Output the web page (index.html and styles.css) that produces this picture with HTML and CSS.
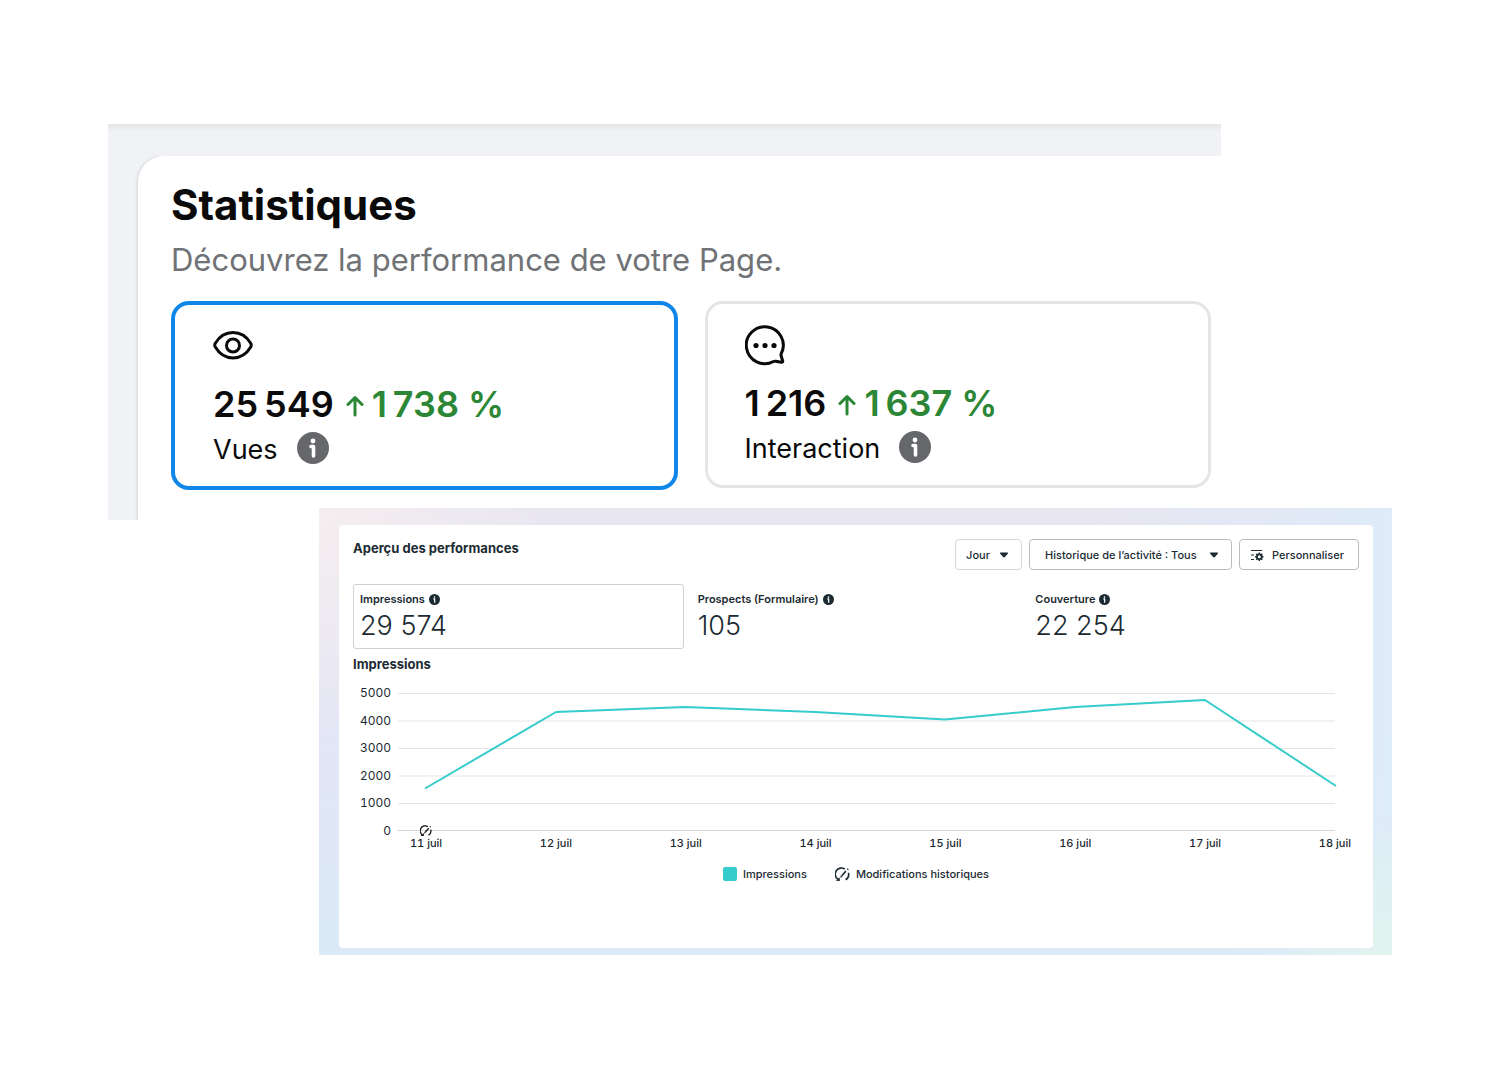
FILE: index.html
```html
<!DOCTYPE html>
<html lang="fr">
<head>
    <meta charset="UTF-8">
    <meta name="viewport" content="width=device-width, initial-scale=1.0">
    <title>Statistiques</title>
    <link rel="stylesheet" href="styles.css">
</head>
<body>
    <svg class="sprite" aria-hidden="true">
        <symbol id="info" viewBox="0 0 32 32">
            <circle cx="16" cy="16" r="16" fill="currentColor"/>
            <circle cx="16" cy="9" r="2.4" fill="#fff"/>
            <path d="M14 14.5h2.5V24" fill="none" stroke="#fff" stroke-width="3.6" stroke-linecap="round" stroke-linejoin="round"/>
        </symbol>
        <symbol id="arrow" viewBox="0 0 18 22">
            <path d="M9 20V3M2 9.500l7-7 7 7" fill="none" stroke="currentColor" stroke-width="3" stroke-linecap="round" stroke-linejoin="round"/>
        </symbol>
        <symbol id="caret" viewBox="0 0 10 6">
            <path d="M1.500.5h7q1 .3.300 1.200L5.900 5q-.9.800-1.800 0L1.200 1.700Q.5.800 1.500.5z" fill="currentColor"/>
        </symbol>
        <symbol id="history" viewBox="0 0 16 16">
            <path d="M10.500 2.200A6.500 6.500 0 0 0 3.200 13.200M14.300 6.200a6.500 6.500 0 0 1-3 7.400M7.200 9.300l4.400-4.900M13.200 2.900l.9-1" fill="none" stroke="currentColor" stroke-width="1.700"/>
            <path d="M.8 14.600l4.400.2-.2-4zM5.600 11.400l.5-2.600 2 1.800z" fill="currentColor"/>
        </symbol>
    </svg>

    <section class="stats">
        <div class="stats-body">
            <h1>Statistiques</h1>
            <p class="subtitle">Découvrez la performance de votre Page.</p>
            <div class="stat-cards">
                <div class="stat-card selected">
                    <svg class="stat-icon" viewBox="0 0 44 44" fill="none" stroke="currentColor" stroke-width="3">
                        <path d="M2.300 20.300C6.500 13.200 12.800 9.500 20 9.500s13.500 3.700 17.700 10.800q1.100 1.900 0 3.800C33.500 31.200 27.200 35 20 35S6.500 31.200 2.300 24.100q-1.100-1.900 0-3.800z"/>
                        <circle cx="20" cy="22.500" r="6.500"/>
                    </svg>
                    <div class="stat-value">25&#8239;549 <span class="trend"><svg class="arrow"><use href="#arrow"/></svg>1&#8239;738 %</span></div>
                    <div class="stat-label">Vues <svg class="stat-info"><use href="#info"/></svg></div>
                </div>
                <div class="stat-card">
                    <svg class="stat-icon" viewBox="0 0 44 44" fill="none" stroke="currentColor" stroke-width="3" stroke-linejoin="round">
                        <path d="M36.200 31.700A18.500 18.500 0 1 0 28.500 39.500q1-.5 2.200-.3l5.800 1.100q1.500.1 1.200-1.300l-1.600-5.300q-.3-1 .1-2z"/>
                        <g fill="currentColor" stroke="none"><circle cx="11" cy="23.500" r="2.600"/><circle cx="20" cy="23.500" r="2.600"/><circle cx="29" cy="23.500" r="2.600"/></g>
                    </svg>
                    <div class="stat-value">1&#8239;216 <span class="trend"><svg class="arrow"><use href="#arrow"/></svg>1&#8239;637 %</span></div>
                    <div class="stat-label">Interaction <svg class="stat-info"><use href="#info"/></svg></div>
                </div>
            </div>
        </div>
    </section>

    <section class="overview">
        <div class="overview-card">
            <header class="overview-header">
                <h2>Aperçu des performances</h2>
                <div class="toolbar">
                    <div class="dropdown light">
                        <select aria-label="Période"><option>Jour</option></select>
                        <svg class="caret"><use href="#caret"/></svg>
                    </div>
                    <div class="dropdown wide">
                        <select aria-label="Historique"><option>Historique de l’activité : Tous</option></select>
                        <svg class="caret"><use href="#caret"/></svg>
                    </div>
                    <button type="button">
                        <svg class="customize" viewBox="0 0 14 14" fill="none" stroke="currentColor">
                            <path d="M1 2.500h11M1 7h3M1 11.500h3" stroke-width="1.200"/>
                            <circle cx="9.300" cy="8.800" r="2.400" stroke-width="1.800"/>
                            <path d="M9.300 4.600v1.500M9.300 11.500V13M5.100 8.800h1.500M12 8.800h1.500M6.300 5.800l1 1M11.300 10.800l1 1M12.300 5.800l-1 1M7.300 10.800l-1 1" stroke-width="1.500"/>
                        </svg>
                        Personnaliser
                    </button>
                </div>
            </header>

            <div class="metrics">
                <div class="metric selected">
                    <div class="metric-label">Impressions <svg class="metric-info"><use href="#info"/></svg></div>
                    <div class="metric-value">29 574</div>
                </div>
                <div class="metric">
                    <div class="metric-label">Prospects (Formulaire) <svg class="metric-info"><use href="#info"/></svg></div>
                    <div class="metric-value">105</div>
                </div>
                <div class="metric">
                    <div class="metric-label">Couverture <svg class="metric-info"><use href="#info"/></svg></div>
                    <div class="metric-value">22 254</div>
                </div>
            </div>

            <h3>Impressions</h3>
            <div class="chart">
                <div class="y-axis">
                    <span>5000</span><span>4000</span><span>3000</span><span>2000</span><span>1000</span><span>0</span>
                </div>
                <div class="plot">
                    <svg class="lines" viewBox="0 0 937 138" preserveAspectRatio="none" fill="none">
                        <path class="grid" d="M0 .5h937M0 28h937M0 55.500h937M0 83h937M0 110.500h937"/>
                        <path class="grid base" d="M0 137.500h937"/>
                        <polyline class="series" points="27,95.500 158,19 287,14 417,19 547,26.500 677,14 807,7 938,93"/>
                    </svg>
                    <svg class="marker"><use href="#history"/></svg>
                </div>
            </div>
            <div class="x-axis">
                <span>11 juil</span><span>12 juil</span><span>13 juil</span><span>14 juil</span><span>15 juil</span><span>16 juil</span><span>17 juil</span><span>18 juil</span>
            </div>
            <div class="legend">
                <span class="legend-item"><i class="swatch"></i>Impressions</span>
                <span class="legend-item"><svg class="legend-icon"><use href="#history"/></svg>Modifications historiques</span>
            </div>
        </div>
    </section>
</body>
</html>
```
FILE: styles.css
```css
* {
    box-sizing: border-box;
}
body {
    margin: 0;
    padding: 124px 108px;
    background-color: #fff;
    font-family: Inter, sans-serif;
    color: #0a0a0a;
}
h1, h2, h3, p {
    margin: 0;
}
svg {
    display: block;
    flex-shrink: 0;
}
.sprite {
    display: none;
}

/* Statistiques */
.stats {
    margin-right: 171px;
    padding: 32px 0 0 30px;
    background: linear-gradient(#e4e5e7, #f0f2f6 8px);
}
.stats-body {
    padding: 25px 10px 30px 33px;
    background-color: #fff;
    border-radius: 26px 0 0 0;
    box-shadow: -1px 0 3px rgba(0, 0, 0, 0.12);
    clip-path: inset(0 0 0 -4px);
}
h1 {
    font-size: 42px;
    line-height: 48px;
    font-weight: 700;
}
.subtitle {
    margin-top: 11px;
    font-size: 31px;
    line-height: 40px;
    color: #707276;
}
.stat-cards {
    display: grid;
    grid-template-columns: 1fr 1fr;
    gap: 27px;
    align-items: start;
    margin-top: 21px;
}
.stat-card {
    padding: 18px 37px;
    border: 3px solid #e5e5e6;
    border-radius: 18px;
}
.stat-card.selected {
    padding: 18px 38px;
    border: 4px solid #1087e8;
}
.stat-icon {
    width: 44px;
    height: 44px;
}
.stat-value {
    display: flex;
    align-items: center;
    gap: 12px;
    margin-top: 17px;
    font-size: 36px;
    line-height: 40px;
    font-weight: 600;
}
.trend {
    display: flex;
    align-items: center;
    gap: 8px;
    color: #2b8735;
}
.arrow {
    width: 18px;
    height: 22px;
    margin-top: 4px;
}
.stat-label {
    display: flex;
    align-items: flex-start;
    gap: 19px;
    margin-top: 8px;
    font-size: 27px;
    line-height: 36px;
}
.stat-info {
    width: 32px;
    height: 32px;
    color: #66676b;
}

/* Aperçu des performances */
.overview {
    margin: -12px 0 0 211px;
    padding: 17px 19px 7px 20px;
    background:
        radial-gradient(circle at 0 0, #f5eef0, transparent 20%),
        radial-gradient(circle at 100% 100%, #e2f4ef, transparent 12%),
        linear-gradient(to right, transparent 70%, #deebf8),
        linear-gradient(#e9e6f1, #e3e6f6 50%, #dbeaf6);
    position: relative;
    font-size: 11px;
    font-weight: 500;
    color: #1c2b33;
}
.overview-card {
    padding: 14px 14px 65px;
    background-color: #fff;
    border-radius: 4px;
}
.overview-header {
    display: flex;
    justify-content: space-between;
    align-items: flex-start;
}
h2, h3 {
    font-size: 13px;
    line-height: 18px;
    font-weight: 700;
}
.toolbar {
    display: flex;
    gap: 7px;
}
.dropdown, .toolbar button {
    display: flex;
    align-items: center;
    height: 31px;
    border: 1px solid #b6bbc4;
    border-radius: 4px;
    background-color: #fff;
}
.dropdown.light {
    border-color: #d4d7dd;
}
.toolbar select, .toolbar button {
    font: inherit;
    color: inherit;
}
.toolbar select {
    appearance: none;
    height: 100%;
    padding: 0 31px 0 10px;
    border: none;
    background: none;
}
.dropdown.wide select {
    padding: 0 34px 0 15px;
}
.caret {
    width: 10px;
    height: 6px;
    margin: 0 12px 0 -22px;
    pointer-events: none;
}
.toolbar button {
    gap: 8px;
    padding: 0 14px 0 10px;
}
.customize {
    width: 14px;
    height: 14px;
}
.metrics {
    display: grid;
    grid-template-columns: repeat(3, 1fr);
    gap: 7px;
    margin-top: 14px;
}
.metric {
    padding: 6px;
    border: 1px solid transparent;
    border-radius: 3px;
}
.metric.selected {
    border-color: #cdd0d6;
}
.metric-label {
    display: flex;
    align-items: center;
    gap: 4px;
    line-height: 16px;
    font-weight: 600;
}
.metric-info {
    width: 11px;
    height: 11px;
}
.metric-value {
    margin-top: 3px;
    font-size: 27px;
    line-height: 32px;
    font-weight: 300;
}
h3 {
    margin-top: 6px;
}
.chart {
    display: flex;
    gap: 7px;
    margin: 12px 24px 0 0;
}
.y-axis, .x-axis {
    font-variant-numeric: tabular-nums;
}
.y-axis {
    display: flex;
    flex-direction: column;
    justify-content: space-between;
    width: 38px;
    font-size: 12px;
    font-weight: 400;
    line-height: 16px;
    text-align: right;
}
.plot {
    position: relative;
    flex: 1;
    padding: 8px 0;
}
.lines {
    width: 100%;
    height: 138px;
    overflow: visible;
}
.lines * {
    vector-effect: non-scaling-stroke;
}
.grid {
    stroke: #e4e5e6;
}
.base {
    stroke: #d3d5d7;
}
.series {
    stroke: #35cccb;
    stroke-width: 2;
    stroke-linejoin: round;
}
.marker {
    position: absolute;
    left: 3%;
    bottom: 2px;
    width: 12px;
    height: 12px;
    margin-left: -6px;
    color: #111;
}
.x-axis {
    display: flex;
    justify-content: space-between;
    margin: -4px 8px 0 57px;
    line-height: 16px;
}
.x-axis span {
    width: 32px;
    display: flex;
    justify-content: center;
    white-space: nowrap;
}
.legend {
    display: flex;
    justify-content: center;
    gap: 28px;
    margin-top: 14px;
    line-height: 18px;
}
.legend-item {
    display: flex;
    align-items: center;
    gap: 6px;
}
.swatch {
    width: 14px;
    height: 14px;
    border-radius: 2px;
    background-color: #35cccb;
}
.legend-icon {
    width: 15px;
    height: 15px;
}
```
